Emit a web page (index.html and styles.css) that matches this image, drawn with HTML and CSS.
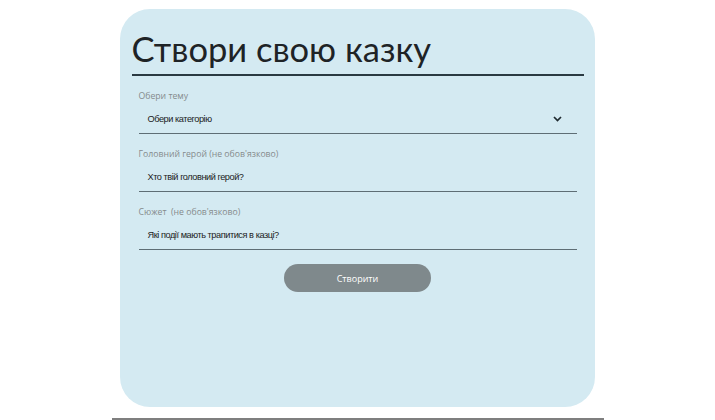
FILE: index.html
```html
<!DOCTYPE html>
<html lang="uk">
<head>
<meta charset="utf-8">
<title>Створи свою казку</title>
<link rel="stylesheet" href="styles.css">
</head>
<body>
<div class="page">
  <main class="card">
    <h1 class="title">Створи свою казку</h1>
    <form class="form">
      <div class="field">
        <label class="label">Обери тему</label>
        <div class="input select">
          <span>Обери категорію</span>
          <svg class="chevron" width="9" height="6" viewBox="0 0 9 6"><path d="M1 1l3.5 3.5L8 1" fill="none" stroke="#1f2a30" stroke-width="1.7"/></svg>
        </div>
      </div>
      <div class="field">
        <label class="label">Головний герой (не обов'язково)</label>
        <div class="input"><span>Хто твій головний герой?</span></div>
      </div>
      <div class="field">
        <label class="label">Сюжет &nbsp;(не обов'язково)</label>
        <div class="input"><span>Які події мають трапитися в казці?</span></div>
      </div>
      <div class="actions">
        <button type="button" class="btn">Створити</button>
      </div>
    </form>
  </main>
  <div class="footer"></div>
</div>
</body>
</html>
```
FILE: styles.css
```css
* { box-sizing: border-box; }
html, body { margin: 0; padding: 0; background: #ffffff; }
body { font-family: "Open Sans", "Noto Sans", sans-serif; }
.page {
  width: 492px;
  margin: 0 auto;
  padding-top: 9px;
}
.card {
  margin: 0 9px 0 8px;
  height: 398px;
  background: #d4eaf2;
  border-radius: 30px;
  padding: 18px 11px 0 12px;
}
.title {
  margin: 0;
  font-family: Lato, "Open Sans", sans-serif;
  font-weight: 400;
  font-size: 34.5px;
  line-height: 43px;
  color: #1e2326;
  padding-bottom: 4px;
  border-bottom: 2px solid #2a3a42;
}
.form {
  padding: 14px 7px 0 7px;
}
.field {
  display: flex;
  flex-direction: column;
  margin-bottom: 14px;
}
.field:last-of-type { margin-bottom: 12px; }
.label {
  font-size: 8.7px;
  line-height: 12px;
  color: #858a8c;
  margin-bottom: 4px;
}
.input {
  height: 28px;
  display: flex;
  align-items: center;
  justify-content: space-between;
  padding: 0 15px 2px 9px;
  border-bottom: 1px solid #5e6e75;
  font-family: "Liberation Sans", Arial, sans-serif;
  font-size: 9.2px;
  letter-spacing: -0.45px;
  color: #1b1b1b;
}
.chevron { display: block; }
.actions {
  display: flex;
  justify-content: center;
}
.btn {
  width: 147px;
  height: 28px;
  border: none;
  border-radius: 14px;
  background: #7f898c;
  color: #ffffff;
  font-family: "Open Sans", sans-serif;
  font-size: 9px;
  padding: 0;
}
.footer {
  margin: 11px 0 0 0;
  border-top: 2px solid #7f7f7f;
  height: 10px;
}
```
